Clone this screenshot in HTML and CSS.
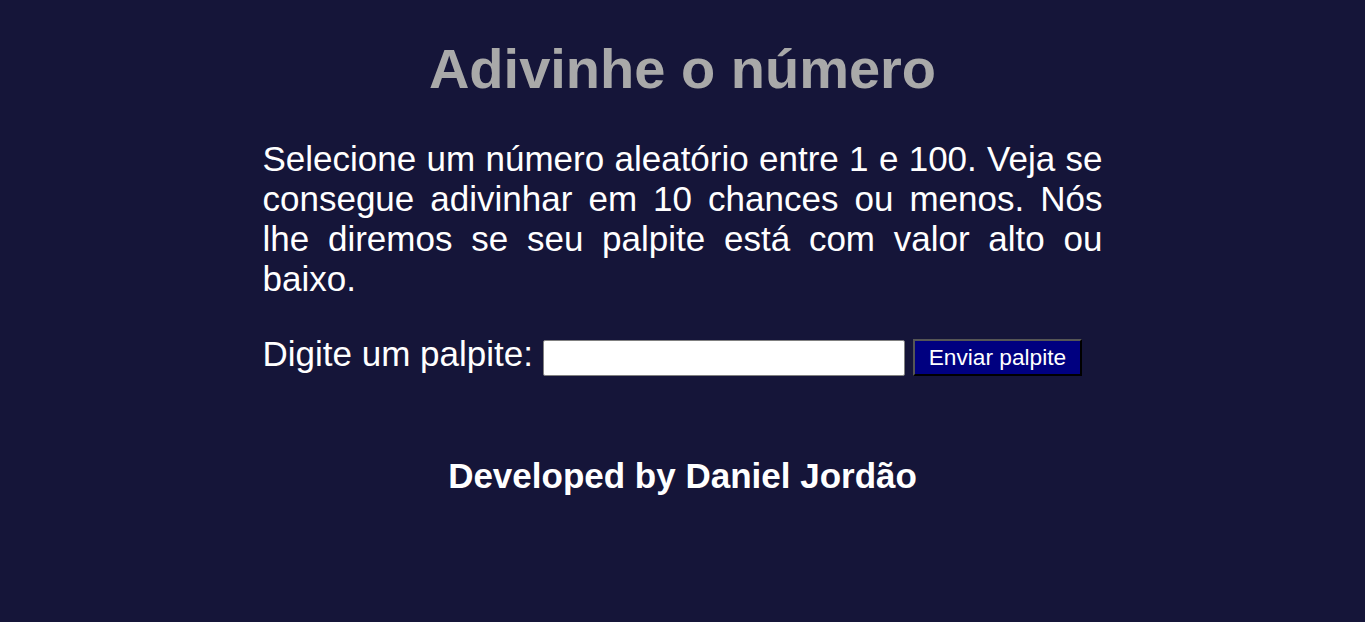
FILE: index.html
```html
<!DOCTYPE html>
<html lang="pt-BR">
<head>
<meta charset="utf-8">
<title>Adivinhe o número</title>
<link rel="stylesheet" href="styles.css">
</head>
<body>
<main class="container">
  <h1 class="title">Adivinhe o número</h1>
  <p class="intro">Selecione um número aleatório entre 1 e 100. Veja se consegue adivinhar em 10 chances ou menos. Nós lhe diremos se seu palpite está com valor alto ou baixo.</p>
  <div class="form-row">
    <label class="guess-label" for="guessField">Digite um palpite:</label>
    <input class="guess-field" type="text" id="guessField">
    <button class="guess-submit" type="button">Enviar palpite</button>
  </div>
  <footer class="credit">Developed by Daniel Jordão</footer>
</main>
</body>
</html>
```
FILE: styles.css
```css
html, body {
  margin: 0;
  padding: 0;
}

body {
  background: #151539;
  color: #ffffff;
  font-family: "Liberation Sans", Arial, sans-serif;
}

.container {
  width: 840px;
  margin: 0 auto;
}

.title {
  margin: 36px 0 0;
  font-size: 56px;
  font-weight: bold;
  line-height: normal;
  text-align: center;
  color: #a9a9a9;
}

.intro {
  margin: 37.5px 0 0;
  font-size: 35px;
  line-height: normal;
  text-align: justify;
}

.form-row {
  display: flex;
  align-items: flex-start;
  margin-top: 35.5px;
}

.guess-label {
  font-size: 35px;
  line-height: normal;
}

.guess-field {
  box-sizing: border-box;
  width: 362px;
  height: 36px;
  margin: 5.5px 0 0 10px;
  padding: 1px 2px;
  border: 1px solid #808080;
  border-radius: 2px;
  background: #ffffff;
  font-family: "Liberation Sans", Arial, sans-serif;
  font-size: 22px;
}

.guess-submit {
  box-sizing: border-box;
  width: 169px;
  height: 37px;
  margin: 5px 0 0 8px;
  padding: 0;
  border: 2px solid;
  border-color: #555555 #000000 #000000 #555555;
  background: #000080;
  color: #ffffff;
  font-family: "Liberation Sans", Arial, sans-serif;
  font-size: 22.7px;
  line-height: 1;
}

.credit {
  margin-top: 80px;
  font-size: 35px;
  font-weight: bold;
  line-height: normal;
  text-align: center;
}
```
